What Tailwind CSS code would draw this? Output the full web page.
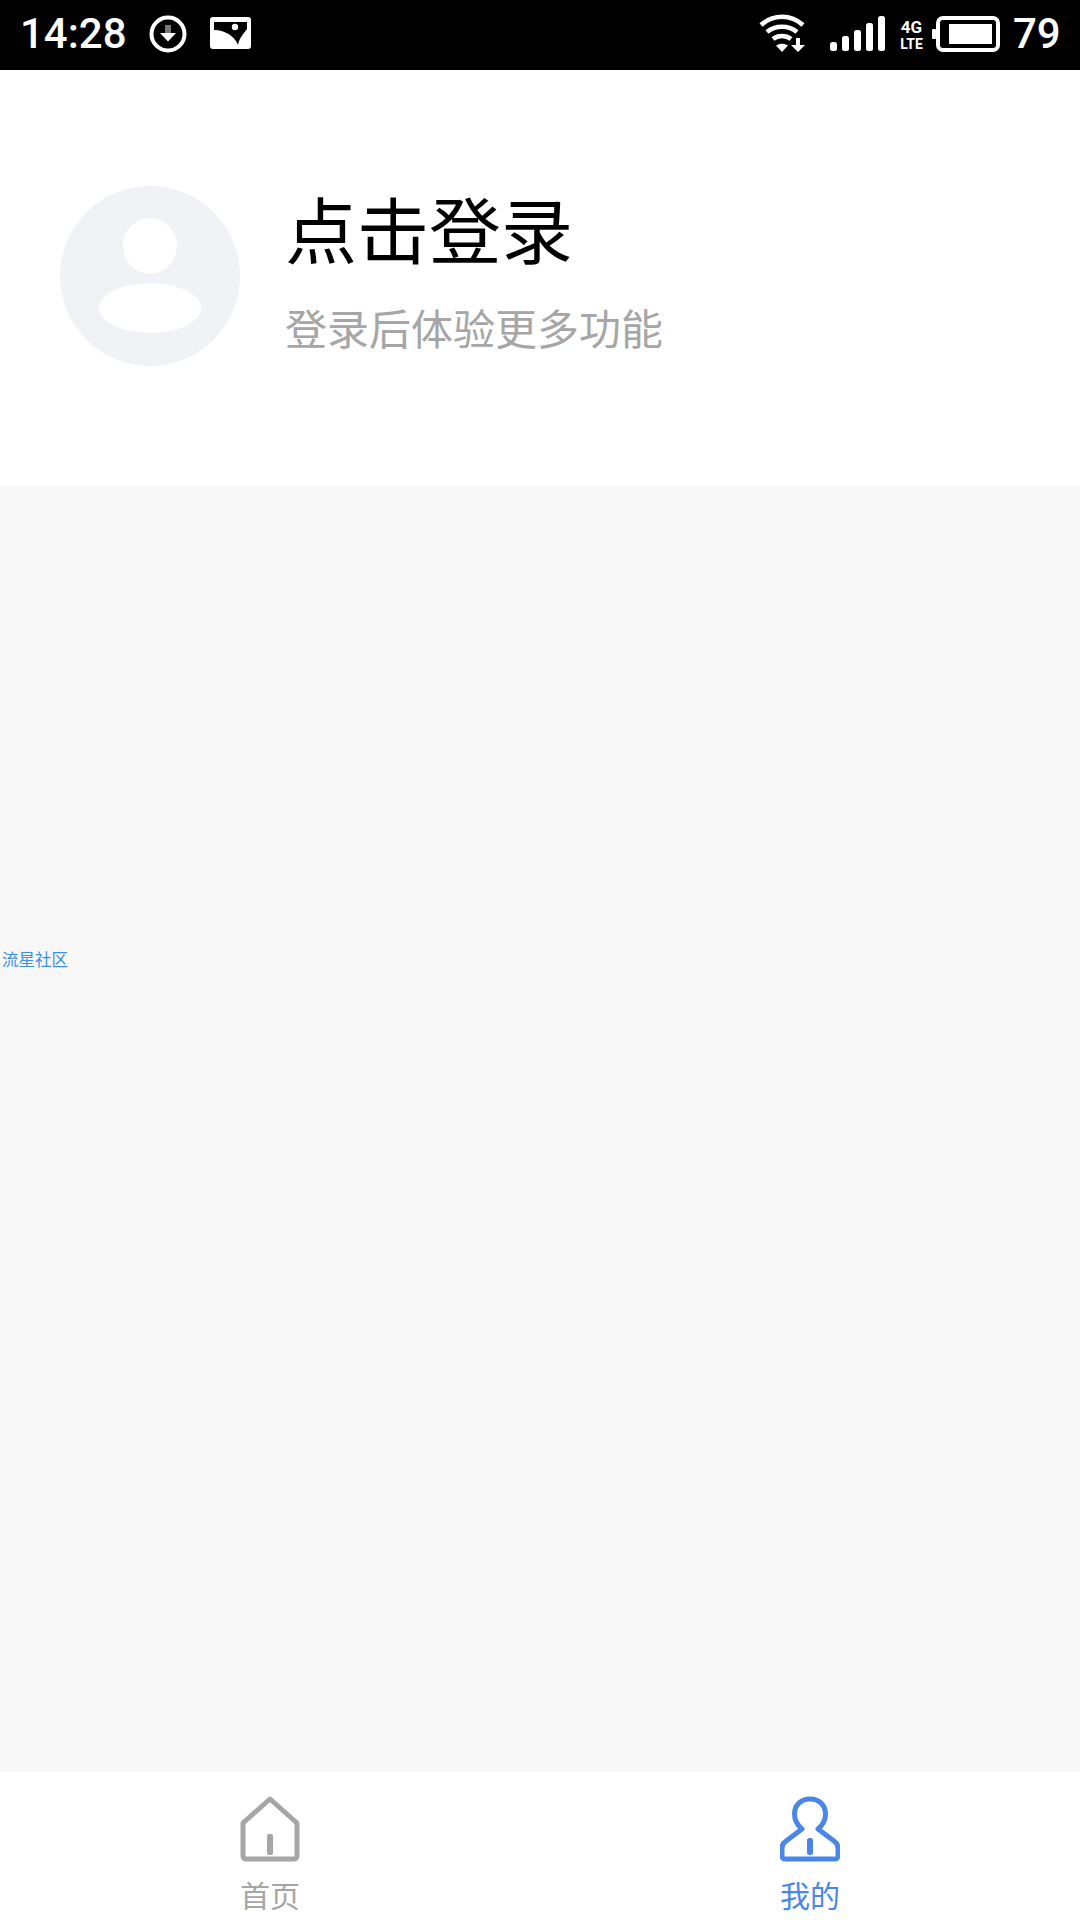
<!DOCTYPE html>
<html lang="zh-CN">
  <head>
    <meta charset="UTF-8" />
    <meta name="viewport" content="width=device-width, initial-scale=1.0" />
    <title>我的</title>
    <script src="https://cdn.jsdelivr.net/npm/@tailwindcss/browser@4"></script>
  </head>
  <body class="bg-white font-['Noto_Sans_CJK_SC',sans-serif]">
    <div class="w-[1080px] h-[1920px] flex flex-col overflow-hidden">
      <!-- status bar -->
      <div class="h-[70px] bg-black text-white flex items-center pl-[20px] pr-[22px] font-['Roboto',sans-serif]">
        <span class="text-[42px] leading-none font-medium w-[106px] -mt-[2px]">14:28</span>
        <svg class="ml-[23px] -mt-[2px]" width="38" height="38" viewBox="0 0 38 38">
          <circle cx="19" cy="19" r="16.500" fill="none" stroke="#fff" stroke-width="4" />
          <rect x="16" y="10" width="6" height="8" fill="#777" />
          <path d="M11 18h16l-8 8.500z" fill="#fff" />
        </svg>
        <svg class="ml-[23px] -mt-[4px]" width="41" height="32" viewBox="0 0 41 32">
          <rect width="41" height="32" rx="3" fill="#fff" />
          <path d="M4 5H37V12C33 17 29 22 28 28C25 20 16 13 4 13Z" fill="#000" />
          <circle cx="25" cy="10" r="3.200" fill="#fff" />
        </svg>
        <svg class="ml-auto -mt-[2px]" width="48" height="40" viewBox="0 0 48 40">
          <path d="M2 11c12-11 30-11 42 0" fill="none" stroke="#fff" stroke-width="4.500" />
          <path d="M8 18c8-7 22-7 30 0" fill="none" stroke="#fff" stroke-width="4.500" />
          <path d="M14 25c5-4 13-4 18 0" fill="none" stroke="#fff" stroke-width="4.500" />
          <path d="M17 31.500c4-2.500 8-2.500 12 0l-6 6.500z" fill="#fff" />
          <path d="M37 24h4v7h5l-7 7-7-7h5z" fill="#fff" />
        </svg>
        <svg class="ml-[23px] -mt-[3px]" width="55" height="36" viewBox="0 0 55 36">
          <rect x="0" y="26" width="7" height="9" rx="2.500" fill="#fff" />
          <rect x="12" y="20" width="7" height="15" rx="2.500" fill="#fff" />
          <rect x="24" y="14" width="7" height="21" rx="2.500" fill="#fff" />
          <rect x="36" y="7" width="7" height="28" rx="2.500" fill="#fff" />
          <rect x="48" y="0" width="7" height="35" rx="2.500" fill="#fff" />
        </svg>
        <div class="ml-[15px] w-[23px] flex flex-col items-center font-bold leading-none -mt-[2px]">
          <span class="text-[17px] leading-[20px]">4G</span>
          <span class="text-[14px] leading-[14px]">LTE</span>
        </div>
        <svg class="ml-[9px] -mt-[3px]" width="68" height="36" viewBox="0 0 68 36">
          <rect x="0" y="13" width="4" height="10" rx="1" fill="#fff" />
          <rect x="6" y="2" width="60" height="32" rx="5" fill="none" stroke="#fff" stroke-width="4" />
          <rect x="17" y="8" width="43" height="20" fill="#fff" />
        </svg>
        <span class="ml-[13px] text-[42px] leading-none font-medium w-[45px] -mt-[2px]">79</span>
      </div>

      <!-- login header -->
      <div class="h-[416px] bg-white flex items-center pl-[60px]">
        <svg class="shrink-0 mb-[4px]" width="180" height="180" viewBox="0 0 180 180">
          <circle cx="90" cy="90" r="90" fill="#f0f2f5" />
          <ellipse cx="90" cy="60" rx="27" ry="28" fill="#fff" />
          <ellipse cx="90" cy="122" rx="51" ry="25" fill="#fff" />
        </svg>
        <div class="ml-[45px] mb-[22px] flex flex-col">
          <span class="text-[72px] leading-[100px] text-black">点击登录</span>
          <span class="text-[42px] leading-[60px] mt-[20px] text-[#a6a6a6]">登录后体验更多功能</span>
        </div>
      </div>

      <!-- empty content -->
      <div class="flex-1 bg-[#f8f8f8] pt-[461px] pl-[2px]">
        <span class="block text-[16.500px] leading-[24px] text-[#3d8fe0]">流星社区</span>
      </div>

      <!-- tab bar -->
      <div class="h-[148px] bg-white flex">
        <div class="flex-1 flex flex-col items-center pt-[24px] text-[#a6a6a6]">
          <svg width="60" height="66" viewBox="0 0 60 66">
            <path d="M30 3 L57 27 V60 a3 3 0 0 1 -3 3 H6 a3 3 0 0 1 -3 -3 V27 Z" fill="none" stroke="#a6a6a6" stroke-width="5" stroke-linejoin="round" />
            <rect x="27" y="38" width="6" height="21" rx="2" fill="#a6a6a6" />
          </svg>
          <span class="text-[30px] leading-[40px] mt-[12px]">首页</span>
        </div>
        <div class="flex-1 flex flex-col items-center pt-[24px] text-[#4a86e8]">
          <svg width="60" height="66" viewBox="0 0 60 66">
            <path d="M22 33 C16 28 14.500 23 14.500 18 C14.500 9 21 3 30 3 C39 3 45.500 9 45.500 18 C45.500 23 44 28 38 33 L54 45 C57 47 58 49 58 52 V60 a3 3 0 0 1 -3 3 H5 a3 3 0 0 1 -3 -3 V52 C2 49 3 47 6 45 Z" fill="none" stroke="#4a86e8" stroke-width="5" stroke-linejoin="round" />
            <rect x="27" y="42" width="6" height="17" rx="2.500" fill="#4a86e8" />
          </svg>
          <span class="text-[30px] leading-[40px] mt-[12px]">我的</span>
        </div>
      </div>
    </div>
  </body>
</html>
